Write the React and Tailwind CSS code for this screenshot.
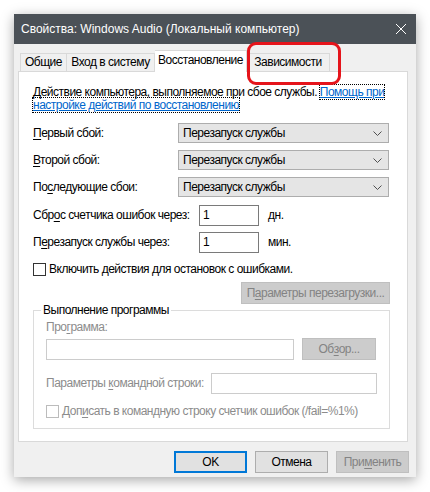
import React from 'react';

const Chevron = () => (
  <svg width="9" height="5" viewBox="0 0 9 5" className="mr-[6px]">
    <path d="M0.5 0.5 L4.5 4.5 L8.5 0.5" fill="none" stroke="#505050" strokeWidth="1" />
  </svg>
);

const Combo = ({ value }) => (
  <div className="w-[211px] h-[20px] bg-[#e5e5e5] border border-[#adadad] flex items-center justify-between pl-[4px]">
    <span>{value}</span>
    <Chevron />
  </div>
);

const U = ({ children }) => <span className="underline underline-offset-[2px]">{children}</span>;

const Btn = ({ children, w = 'w-[73px]', primary, disabled }) => (
  <div
    className={
      primary
        ? `${w} h-[22px] bg-[#e1e1e1] border-2 border-[#0078d7] flex items-center justify-center`
        : disabled
        ? `${w} h-[22px] bg-[#cccccc] border border-[#bfbfbf] text-[#838383] flex items-center justify-center`
        : `${w} h-[22px] bg-[#e1e1e1] border border-[#adadad] flex items-center justify-center`
    }
  >
    {children}
  </div>
);

export default function App() {
  return (
    <div className="w-[430px] h-[492px] bg-white pt-[14px] pl-[14px] font-['Liberation_Sans',Arial,sans-serif] text-[12px] leading-[13px] text-black tracking-[-0.5px]">
      <div className="relative w-[402px] h-[463px] bg-[#f0f0f0] shadow-[0_3px_12px_rgba(0,0,0,0.35)] flex flex-col">
        {/* Title bar */}
        <div className="h-[30px] bg-[#4b5157] flex items-center justify-between pl-[7px] pr-[10px] text-white tracking-normal">
          <span>Свойства: Windows Audio (Локальный компьютер)</span>
          <svg width="10" height="10" viewBox="0 0 10 10">
            <path d="M0 0 L10 10 M10 0 L0 10" stroke="#ffffff" strokeWidth="1" />
          </svg>
        </div>

        {/* Tabs */}
        <div className="flex items-end pl-[6px] pt-[6px] h-[27px] relative z-10">
          <div className="w-[47px] h-[18px] border border-b-0 border-[#d9d9d9] bg-[#f0f0f0] flex items-center justify-center">Общие</div>
          <div className="w-[88px] h-[18px] border border-b-0 border-l-0 border-[#d9d9d9] bg-[#f0f0f0] flex items-center justify-center">Вход в систему</div>
          <div className="w-[92px] h-[22px] -mb-px border border-b-0 border-l-0 border-[#d9d9d9] bg-white flex justify-center pt-[3px]">Восстановление</div>
          <div className="w-[83px] h-[18px] border border-b-0 border-l-0 border-[#d9d9d9] bg-[#f0f0f0] flex items-center justify-center">Зависимости</div>
        </div>

        {/* Panel */}
        <div className="ml-[4px] w-[390px] h-[371px] bg-white border border-[#d9d9d9] flex flex-col pl-[14px] pt-[14px]">
          <p>
            Действие компьютера, выполняемое при сбое службы.{' '}
            <span className="text-[#0066cc] underline outline-1 outline-dotted outline-black">Помощь при</span>
            <br />
            <span className="text-[#0066cc] underline outline-1 outline-dotted outline-black">настройке действий по восстановлению</span>
          </p>

          <div className="mt-[11px] flex flex-col gap-[7px]">
            <div className="flex items-center">
              <span className="w-[145px]"><U>П</U>ервый сбой:</span>
              <Combo value="Перезапуск службы" />
            </div>
            <div className="flex items-center">
              <span className="w-[145px]"><U>В</U>торой сбой:</span>
              <Combo value="Перезапуск службы" />
            </div>
            <div className="flex items-center">
              <span className="w-[145px]">По<U>с</U>ледующие сбои:</span>
              <Combo value="Перезапуск службы" />
            </div>
          </div>

          <div className="mt-[8px] flex flex-col gap-[6px]">
            <div className="flex items-center">
              <span className="w-[166px] whitespace-nowrap">Сбр<U>о</U>с счетчика ошибок через:</span>
              <div className="w-[60px] h-[21px] border border-[#7a7a7a] pl-[3px] flex items-center">1</div>
              <span className="ml-[9px]">дн.</span>
            </div>
            <div className="flex items-center">
              <span className="w-[166px] whitespace-nowrap">П<U>е</U>резапуск службы через:</span>
              <div className="w-[60px] h-[21px] border border-[#7a7a7a] pl-[3px] flex items-center">1</div>
              <span className="ml-[9px]">мин.</span>
            </div>
          </div>

          <div className="mt-[10px] flex items-center">
            <div className="w-[13px] h-[13px] border border-[#333333] bg-white" />
            <span className="ml-[3px]">Включить действия для остановок с ошибками.</span>
          </div>

          <div className="mt-[6px] ml-[208px]">
            <Btn w="w-[149px]" disabled>
              <span className="whitespace-nowrap">
                П<U>а</U>раметры перезагрузки...
              </span>
            </Btn>
          </div>

          {/* Group box */}
          <div className="mt-[6px] w-[357px] h-[119px] border border-[#dcdcdc] flex flex-col pl-[12px]">
            <span className="-mt-[7px] -ml-[5px] w-fit bg-white px-[2px]">Выполнение программы</span>
            <span className="mt-[4px] text-[#8c8c8c]">Про<U>г</U>рамма:</span>
            <div className="mt-[4px] flex items-center">
              <div className="w-[248px] h-[21px] border border-[#cccccc]" />
              <div className="ml-[8px]">
                <Btn w="w-[74px]" disabled>
                  Об<U>з</U>ор...
                </Btn>
              </div>
            </div>
            <div className="mt-[13px] flex items-center">
              <span className="w-[165px] whitespace-nowrap text-[#8c8c8c]">Параметры <U>к</U>омандной строки:</span>
              <div className="w-[166px] h-[21px] border border-[#cccccc]" />
            </div>
            <div className="mt-[11px] flex items-center text-[#8c8c8c]">
              <div className="w-[13px] h-[13px] border border-[#bcbcbc] bg-white" />
              <span className="ml-[3px] whitespace-nowrap">Доп<U>и</U>сать в командную строку счетчик ошибок (/fail=%1%)</span>
            </div>
          </div>
        </div>

        {/* Buttons */}
        <div className="mt-[9px] flex justify-end gap-[8px] pr-[7px]">
          <Btn primary>OK</Btn>
          <Btn>Отмена</Btn>
          <Btn disabled>
            При<U>м</U>енить
          </Btn>
        </div>

        {/* Red highlight */}
        <div className="absolute left-[233px] top-[28px] w-[94px] h-[43px] border-[3px] border-[#e5141b] rounded-[9px] z-20" />
      </div>
    </div>
  );
}
